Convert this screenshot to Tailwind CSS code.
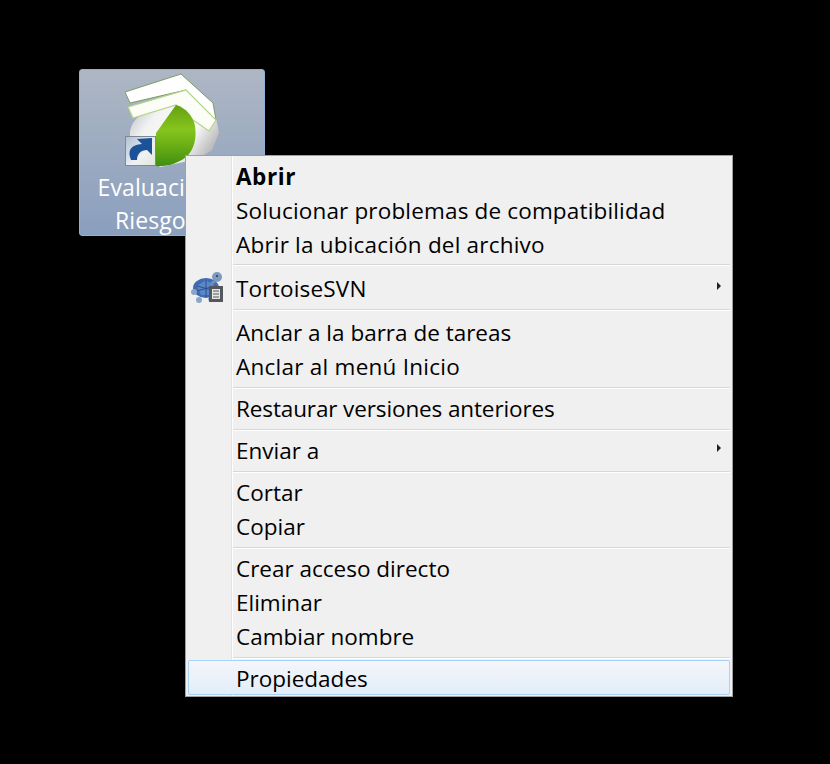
<!DOCTYPE html>
<html lang="es">
  <head>
    <meta charset="UTF-8" />
    <title>Menú contextual</title>
    <script src="https://cdn.jsdelivr.net/npm/@tailwindcss/browser@4"></script>
  </head>
  <body class="bg-black">
    <div class="relative w-[830px] h-[764px] bg-black overflow-hidden font-['Open_Sans','Noto_Sans',sans-serif]">

      <!-- Desktop icon -->
      <div class="absolute left-[79px] top-[69px] w-[186px] h-[167px] rounded-[3px] border border-[#8fb0d8] bg-gradient-to-b from-[#aeb6c3] to-[#8a9fbe] flex flex-col items-center">
        <svg class="shrink-0" width="114" height="100" viewBox="115 70 114 100">
          <defs>
            <linearGradient id="pie" x1="0" y1="0" x2="0" y2="1">
              <stop offset="0" stop-color="#659f12" />
              <stop offset="0.4" stop-color="#86c51c" />
              <stop offset="0.7" stop-color="#66ab14" />
              <stop offset="1" stop-color="#3f8f10" />
            </linearGradient>
            <linearGradient id="disc" x1="0" y1="0" x2="1" y2="0.6">
              <stop offset="0" stop-color="#a9adb3" />
              <stop offset="0.35" stop-color="#f2f2f2" />
              <stop offset="0.75" stop-color="#ffffff" />
              <stop offset="1" stop-color="#bdbdbd" />
            </linearGradient>
            <linearGradient id="tile" x1="0" y1="0" x2="1" y2="1">
              <stop offset="0" stop-color="#aebfd2" />
              <stop offset="0.6" stop-color="#eef2f4" />
              <stop offset="1" stop-color="#dfe6d8" />
            </linearGradient>
          </defs>
          <path d="M130 131 C132 122 137 117 146 112 L186 90 L216 118 L219 133 L212 150 L198 159 L160 167 L130 142 Z" fill="url(#disc)" />
          <path d="M125 92 L181 74 L213 103 L216 120 L186 90 L130 103 Z" fill="#ffffff" stroke="#7f9c68" stroke-width="1" />
          <path d="M128 107 L186 90 L216 120 L209 131 L193 120 L176 105 L133 118 Z" fill="#fbfdf6" stroke="#b3d58a" stroke-width="1.2" />
          <path d="M156 133 L176 105 C186 108 193 116 195 126 C197 138 194 150 186 157 C177 164 166 167 155 166 Z" fill="url(#pie)" />
          <rect x="125.5" y="136.5" width="30" height="29" fill="url(#tile)" stroke="#7f8894" />
          <path d="M131 160 C127 150 131 145 142 144 L137 139 L152 138 L152 155 L147 150 C141 150 137 154 137 160 Z" fill="#1c5298" />
        </svg>
        <div class="mt-[1px] w-full text-white text-[23px] tracking-[0.1px] leading-[33px] text-center">
          <div>Evaluación de</div>
          <div class="text-left pl-[35px]">Riesgos</div>
        </div>
      </div>

      <!-- Context menu -->
      <div class="absolute left-[185px] top-[155px] w-[548px] h-[542px] border border-[#a0a0a0] bg-[#f0f0f0] pt-[4px] px-[2px] text-[22.5px] leading-[34px] text-black">
        <div class="absolute left-[45px] top-0 bottom-0 w-[2px] bg-[#e2e3e3] border-r border-white"></div>

        <div class="relative pl-[48px] font-bold tracking-[0.6px]">Abrir</div>
        <div class="relative pl-[48px] tracking-[0.16px]">Solucionar problemas de compatibilidad</div>
        <div class="relative pl-[48px] tracking-[0.2px]">Abrir la ubicación del archivo</div>

        <div class="relative ml-[45px] mt-[2px] h-[2px] bg-[#d7d7d7] border-b border-white mb-[6px]"></div>

        <div class="relative pl-[48px] flex items-center justify-between">
          <svg class="absolute left-[2px] top-[-3px]" width="36" height="36" viewBox="0 0 36 36">
            <ellipse cx="16" cy="19" rx="13" ry="10" fill="#3e6cb2" />
            <path d="M7 17 L16 11 L25 17 L20 26 L11 26 Z" fill="#5b86c9" />
            <path d="M16 11 L16 28 M7 17 L25 22 M25 17 L7 22" stroke="#2d4f8c" stroke-width="1" />
            <circle cx="27" cy="8" r="5" fill="#7d99bd" />
            <circle cx="27" cy="7" r="1" fill="#26395c" />
            <path d="M25 12 L21 15" stroke="#6f8fb8" stroke-width="3" />
            <circle cx="4" cy="23" r="3" fill="#8ba5c9" />
            <circle cx="9" cy="31" r="3" fill="#8ba5c9" />
            <circle cx="20" cy="30" r="2" fill="#8ba5c9" />
            <rect x="19" y="17" width="14" height="16" fill="#54575c" />
            <rect x="22" y="20" width="8" height="10" fill="#e6e6e6" />
            <path d="M23 22 H29 M23 25 H29 M23 28 H29" stroke="#54575c" stroke-width="1" />
          </svg>
          <span class="tracking-[0.2px]">TortoiseSVN</span>
          <span class="mr-[9px] -mt-[6px] w-0 h-0 border-y-[4px] border-y-transparent border-l-[4px] border-l-[#222]"></span>
        </div>

        <div class="relative ml-[45px] mt-[3px] h-[2px] bg-[#d7d7d7] border-b border-white mb-[5px]"></div>

        <div class="relative pl-[48px]">Anclar a la barra de tareas</div>
        <div class="relative pl-[48px] tracking-[0.25px]">Anclar al menú Inicio</div>

        <div class="relative ml-[45px] mt-[3px] h-[2px] bg-[#d7d7d7] border-b border-white mb-[3px]"></div>

        <div class="relative pl-[48px] -tracking-[0.12px]">Restaurar versiones anteriores</div>

        <div class="relative ml-[45px] mt-[3px] h-[2px] bg-[#d7d7d7] border-b border-white mb-[3px]"></div>

        <div class="relative pl-[48px] flex items-center justify-between">
          <span>Enviar a</span>
          <span class="mr-[9px] -mt-[6px] w-0 h-0 border-y-[4px] border-y-transparent border-l-[4px] border-l-[#222]"></span>
        </div>

        <div class="relative ml-[45px] mt-[3px] h-[2px] bg-[#d7d7d7] border-b border-white mb-[3px]"></div>

        <div class="relative pl-[48px]">Cortar</div>
        <div class="relative pl-[48px]">Copiar</div>

        <div class="relative ml-[45px] mt-[3px] h-[2px] bg-[#d7d7d7] border-b border-white mb-[3px]"></div>

        <div class="relative pl-[48px]">Crear acceso directo</div>
        <div class="relative pl-[48px]">Eliminar</div>
        <div class="relative pl-[48px]">Cambiar nombre</div>

        <div class="relative ml-[45px] mt-[3px] h-[2px] bg-[#d7d7d7] border-b border-white mb-[3px]"></div>

        <div class="relative -mt-[2px] h-[35px] pl-[47px] rounded-[2px] border border-[#a9d2f5] bg-gradient-to-b from-[#f4f6fa] to-[#e3edf8] leading-[36px]">
          Propiedades
        </div>
      </div>
    </div>
  </body>
</html>
